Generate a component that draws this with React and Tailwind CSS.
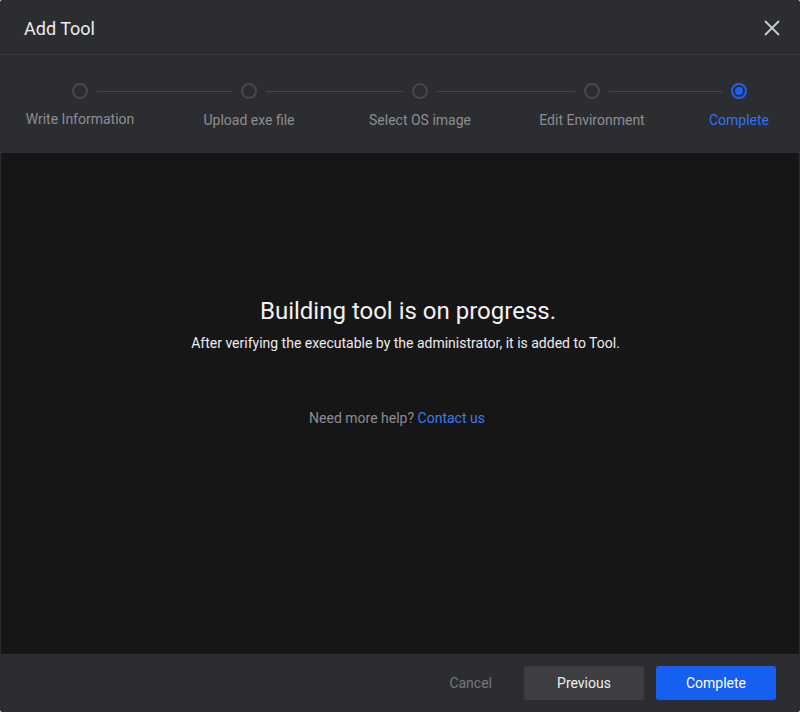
import { X } from 'lucide-react';

const STEPS = [
  { label: 'Write Information' },
  { label: 'Upload exe file' },
  { label: 'Select OS image' },
  { label: 'Edit Environment' },
  { label: 'Complete', active: true },
];

function StepDot({ active }) {
  if (active) {
    return (
      <div className="w-4 h-4 rounded-full border-2 border-[#1a62f2] flex items-center justify-center shrink-0">
        <div className="w-2 h-2 rounded-full bg-[#1a62f2]" />
      </div>
    );
  }
  return <div className="w-4 h-4 rounded-full border-2 border-[#47484c] shrink-0" />;
}

function Stepper() {
  return (
    <div className="pt-[28px] pb-[23px]">
      {/* dots + connecting lines */}
      <div className="flex items-center pl-[72px]">
        <StepDot />
        <div className="h-px bg-[#46474b] w-[135px] mx-[9px]" />
        <StepDot />
        <div className="h-px bg-[#46474b] w-[137px] mx-[9px]" />
        <StepDot />
        <div className="h-px bg-[#46474b] w-[138px] mx-[9px]" />
        <StepDot />
        <div className="h-px bg-[#46474b] w-[113px] mx-[9px]" />
        <StepDot active />
      </div>
      {/* labels, each centred under its dot */}
      <div className="flex mt-[11px] pl-[20px] text-[14px] leading-5">
        <div className="w-[120px] flex justify-center -mt-px text-[#8c8d92] whitespace-nowrap">
          {STEPS[0].label}
        </div>
        <div className="w-[120px] ml-[49px] flex justify-center text-[#8c8d92] whitespace-nowrap">
          {STEPS[1].label}
        </div>
        <div className="w-[120px] ml-[51px] flex justify-center text-[#8c8d92] whitespace-nowrap">
          {STEPS[2].label}
        </div>
        <div className="w-[120px] ml-[52px] flex justify-center text-[#8c8d92] whitespace-nowrap">
          {STEPS[3].label}
        </div>
        <div className="w-[120px] ml-[27px] flex justify-center text-[#2f72f5] whitespace-nowrap">
          {STEPS[4].label}
        </div>
      </div>
    </div>
  );
}

export default function App() {
  return (
    <div
      className="w-[800px] h-[712px] bg-[#2c2d30] flex flex-col overflow-hidden rounded-[2px]"
      style={{ fontFamily: 'Roboto, "Liberation Sans", sans-serif' }}
    >
      <header className="h-[55px] shrink-0 flex items-center justify-between pl-6 pr-[15px] border-b border-[#3a3b3f]">
        <h1 className="text-[18px] leading-7 text-[#ececee] mt-[3px]">Add Tool</h1>
        <button type="button" aria-label="Close" className="text-[#c9ccd3] mt-px">
          <X size={26} strokeWidth={1.7} />
        </button>
      </header>

      <Stepper />

      <main className="flex-1 mx-px bg-[#161617] flex flex-col items-center pt-[142px]">
        <h2 className="text-[24px] leading-8 text-[#f2f2f3] ml-4">Building tool is on progress.</h2>
        <p className="mt-[6px] ml-[11px] text-[14px] leading-5 text-[#ececee]">
          After verifying the executable by the administrator, it is added to Tool.
        </p>
        <p className="mt-[55px] -ml-[6px] text-[14px] leading-5 text-[#8c8d92]">
          Need more help? <span className="text-[#3a7af2]">Contact us</span>
        </p>
      </main>

      <footer className="h-[58px] shrink-0 flex items-center justify-end pr-6">
        <button type="button" className="px-4 h-[34px] text-[14px] text-[#76777c] mr-4">
          Cancel
        </button>
        <button
          type="button"
          className="w-[120px] h-[34px] rounded-[3px] bg-[#3d3e42] text-[14px] text-[#eeeef0]"
        >
          Previous
        </button>
        <button
          type="button"
          className="w-[120px] h-[34px] ml-3 rounded-[3px] bg-[#165ff0] text-[14px] text-white"
        >
          Complete
        </button>
      </footer>
    </div>
  );
}
